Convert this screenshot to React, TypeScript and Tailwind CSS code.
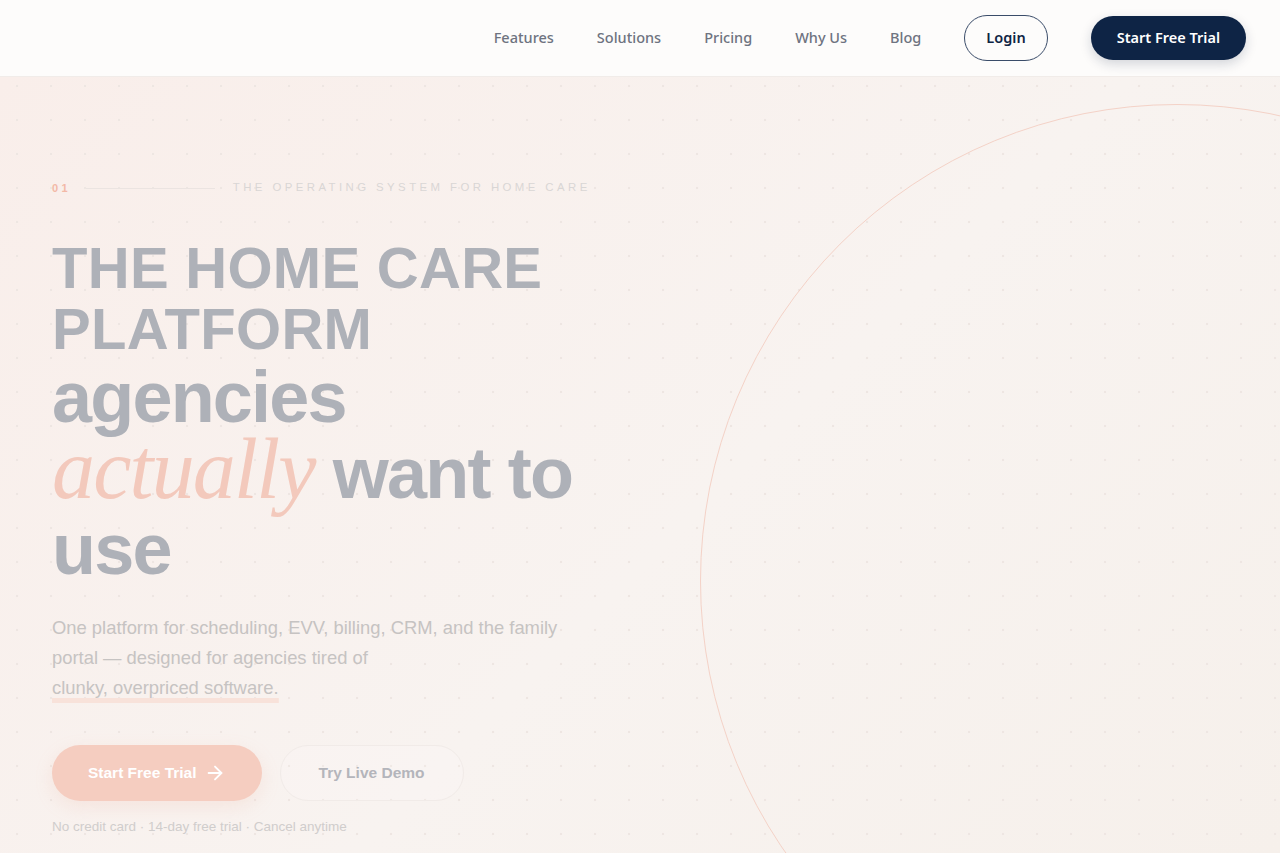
import React from "react";
import { ArrowRight } from "lucide-react";

const NAV_LINKS = ["Features", "Solutions", "Pricing", "Why Us", "Blog"];

function Navbar() {
  return (
    <header className="relative z-10 h-[77px] border-b border-[#f1ece9] bg-[#fdfcfb] font-['Noto_Sans',sans-serif]">
      <div className="flex h-[76px] items-center justify-end gap-[43px] pr-[34px]">
        {NAV_LINKS.map((label) => (
          <a key={label} href="#" className="text-[14.5px] font-medium text-[#6e7380]">
            {label}
          </a>
        ))}
        <button className="h-[46px] rounded-full border border-[#3a4c69] px-[21px] text-[14.5px] font-semibold text-[#0f2444]">
          Login
        </button>
        <button className="h-[44px] rounded-full bg-[#0e2445] px-[26px] text-[14.5px] font-semibold text-white shadow-[0_4px_12px_rgba(14,36,69,0.18)]">
          Start Free Trial
        </button>
      </div>
    </header>
  );
}

function Hero() {
  return (
    <section className="relative min-h-[776px] overflow-hidden bg-[linear-gradient(135deg,#f9eeea_0%,#f8f3f0_55%,#f6f0eb_100%)] font-['Liberation_Sans',Arial,sans-serif]">
      {/* dot grid */}
      <div className="pointer-events-none absolute inset-0 bg-[radial-gradient(circle,#eee6e2_1px,transparent_1.6px)] bg-[length:34px_34px] bg-[position:0px_-8px]" />
      {/* decorative ring */}
      <div className="pointer-events-none absolute left-[700px] top-[27px] h-[954px] w-[954px] rounded-full border border-[#f4d2c7]" />

      <div className="relative px-[52px] pt-[103px]">
        {/* eyebrow */}
        <div className="flex h-4 items-center">
          <span className="text-[11px] font-bold tracking-[0.3em] text-[#f3b9a7]">01</span>
          <span className="ml-[15px] mr-[18px] h-px w-[129px] bg-[#ebe4e1]" />
          <span className="text-[11.4px] tracking-[0.3em] text-[#d9d6d5]">
            THE OPERATING SYSTEM FOR HOME CARE
          </span>
        </div>

        {/* headline */}
        <h1 className="mt-[41px] font-bold text-[#aeb1b8]">
          <span className="block text-[58px] leading-[61px] tracking-[0.005em]">
            THE HOME CARE
            <br />
            PLATFORM
          </span>
          <span className="block text-[72px] leading-[76px] tracking-[-0.025em]">
            agencies
            <br />
            <span className="font-['Liberation_Serif',serif] text-[86px] font-normal italic leading-[0] text-[#f3c9bc]">
              actually
            </span>{" "}
            want to
            <br />
            use
          </span>
        </h1>

        {/* lead */}
        <p className="mt-[26px] max-w-[530px] text-[18.4px] leading-[30px] text-[#c6c3c2]">
          One platform for scheduling, EVV, billing, CRM, and the family portal — designed for
          agencies tired of{" "}
          <span className="inline-block bg-[linear-gradient(#f8e2da,#f8e2da)] bg-[length:100%_5px] bg-bottom bg-no-repeat">
            clunky, overpriced software.
          </span>
        </p>

        {/* actions */}
        <div className="mt-[42px] flex items-center gap-[18px]">
          <button className="flex h-14 items-center gap-[7px] rounded-full bg-[#f5cdc0] px-9 text-[15.5px] font-bold text-white shadow-[0_6px_18px_rgba(240,170,150,0.18)]">
            Start Free Trial
            <ArrowRight size={22} strokeWidth={2} />
          </button>
          <button className="h-14 rounded-full border border-[#f1ebe8] bg-white/10 px-[38px] text-[15.5px] font-bold text-[#b4b5bb]">
            Try Live Demo
          </button>
        </div>

        <p className="mt-4 text-[13.5px] leading-5 text-[#d0cdcc]">
          No credit card · 14-day free trial · Cancel anytime
        </p>
      </div>
    </section>
  );
}

export default function App() {
  return (
    <div className="min-h-screen bg-[#f7f2ef]">
      <Navbar />
      <Hero />
    </div>
  );
}
